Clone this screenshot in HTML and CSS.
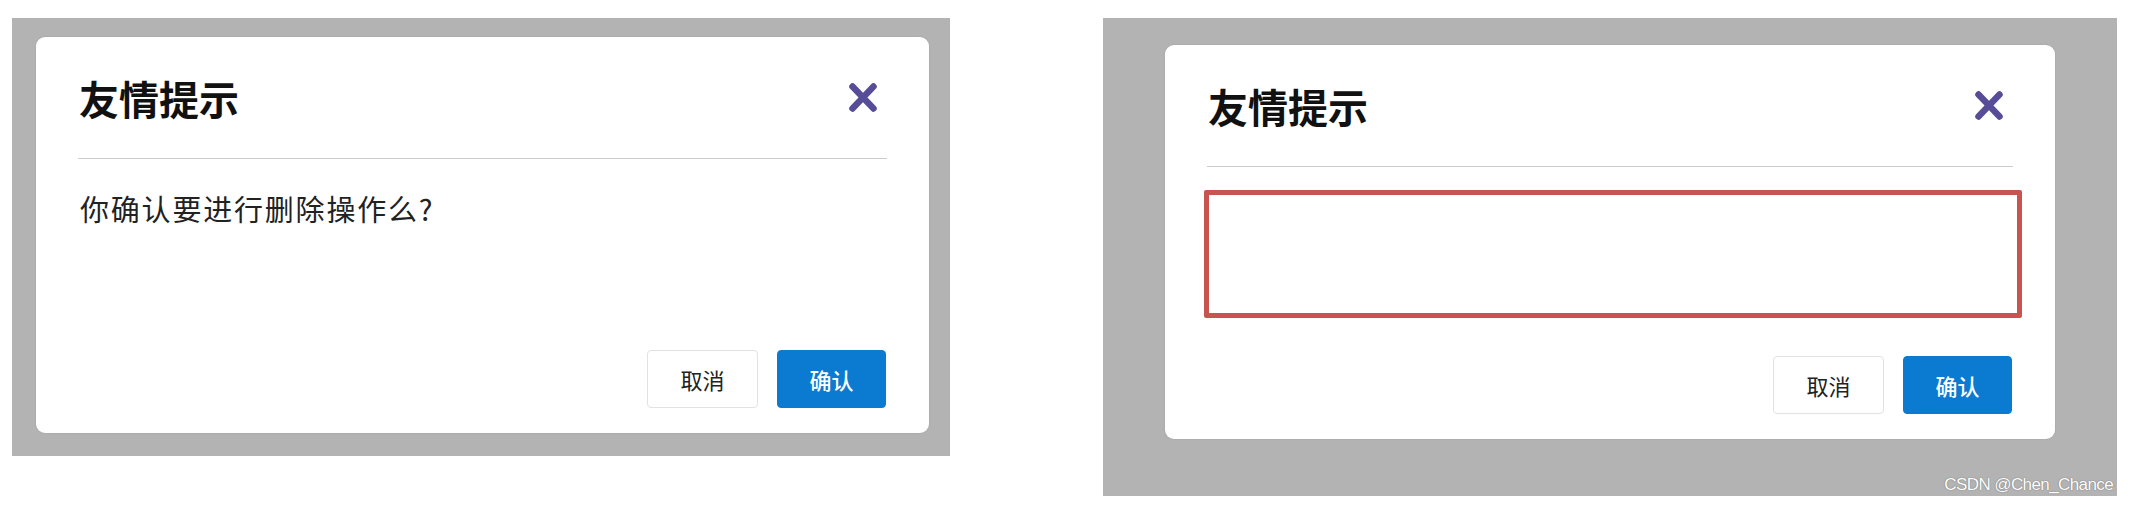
FILE: index.html
```html
<!DOCTYPE html>
<html lang="zh-CN">
<head>
<meta charset="utf-8">
<title>友情提示</title>
<link rel="stylesheet" href="styles.css">
</head>
<body>
<div class="stage">
  <section class="panel panel-left">
    <div class="dialog">
      <header class="dialog-header">
        <h2 class="dialog-title">友情提示</h2>
        <button class="close" type="button" aria-label="关闭">
          <svg viewBox="0 0 30 31" width="30" height="31"><path d="M4.5 4.5 L25.5 26.5 M25.5 4.5 L4.5 26.5" stroke="#574c97" stroke-width="6.5" stroke-linecap="round" fill="none"/></svg>
        </button>
      </header>
      <div class="dialog-body">
        <p class="message">你确认要进行删除操作么?</p>
      </div>
      <footer class="dialog-footer">
        <button class="btn btn-cancel" type="button">取消</button>
        <button class="btn btn-primary" type="button">确认</button>
      </footer>
    </div>
  </section>
  <section class="panel panel-right">
    <div class="dialog">
      <header class="dialog-header">
        <h2 class="dialog-title">友情提示</h2>
        <button class="close" type="button" aria-label="关闭">
          <svg viewBox="0 0 30 31" width="30" height="31"><path d="M4.5 4.5 L25.5 26.5 M25.5 4.5 L4.5 26.5" stroke="#574c97" stroke-width="6.5" stroke-linecap="round" fill="none"/></svg>
        </button>
      </header>
      <div class="dialog-body">
        <div class="slot"></div>
      </div>
      <footer class="dialog-footer">
        <button class="btn btn-cancel" type="button">取消</button>
        <button class="btn btn-primary" type="button">确认</button>
      </footer>
    </div>
    <span class="watermark">CSDN @Chen_Chance</span>
  </section>
</div>
</body>
</html>
```
FILE: styles.css
```css
* { box-sizing: border-box; }
html, body { margin: 0; padding: 0; background: #ffffff; }
body { font-family: "Noto Sans CJK SC", "Liberation Sans", sans-serif; }

.stage {
  display: flex;
  align-items: flex-start;
  gap: 153px;
  padding: 18px 0 0 12px;
}

.panel {
  background: #b3b3b3;
  display: flex;
}
.panel-left {
  width: 938px;
  height: 438px;
  padding: 19px 21px 23px 24px;
}
.panel-right {
  position: relative;
  width: 1014px;
  height: 478px;
  padding: 27px 62px 57px 62px;
}

.dialog {
  flex: 1;
  background: #ffffff;
  border-radius: 9px;
  box-shadow: 0 0 2px rgba(0,0,0,0.12);
  display: flex;
  flex-direction: column;
}

.dialog-header {
  height: 122px;
  margin: 0 42px;
  border-bottom: 1px solid #cccccc;
  display: flex;
  align-items: center;
  justify-content: space-between;
}
.dialog-title {
  margin: 0 0 0 1px;
  font-size: 40px;
  line-height: 1;
  font-weight: 700;
  color: #111111;
}
.close {
  border: 0;
  padding: 0;
  margin: 0 9px 0 0;
  background: transparent;
  width: 30px;
  height: 31px;
  display: block;
}
.close svg { display: block; }

.dialog-body {
  flex: 1;
}
.message {
  margin: 0;
  padding: 27px 0 0 44px;
  font-size: 29px;
  line-height: 45px;
  color: #222222;
  letter-spacing: 1.8px;
}
.slot {
  margin: 23px 33px 0 39px;
  height: 128px;
  border: 5px solid #c9534f;
  border-radius: 2px;
}

.dialog-footer {
  display: flex;
  justify-content: flex-end;
  align-items: center;
  gap: 19px;
  padding: 0 43px 25px 0;
}
.btn {
  font-family: "Noto Sans CJK SC", "Liberation Sans", sans-serif;
  font-size: 22px;
  height: 58px;
  border-radius: 4px;
  padding: 0;
  cursor: pointer;
}
.btn-cancel {
  width: 111px;
  background: #ffffff;
  border: 1px solid #e2e2e2;
  color: #222222;
}
.btn-primary {
  width: 109px;
  background: #0b7ad1;
  border: 1px solid #0b7ad1;
  color: #ffffff;
  font-weight: 500;
}

.watermark {
  position: absolute;
  right: 4px;
  bottom: 1px;
  font-family: "Liberation Sans", sans-serif;
  font-size: 17px;
  letter-spacing: -0.6px;
  color: #ffffff;
  text-shadow: 0 0 1px #777777, 0 0 1px #777777;
}
```
